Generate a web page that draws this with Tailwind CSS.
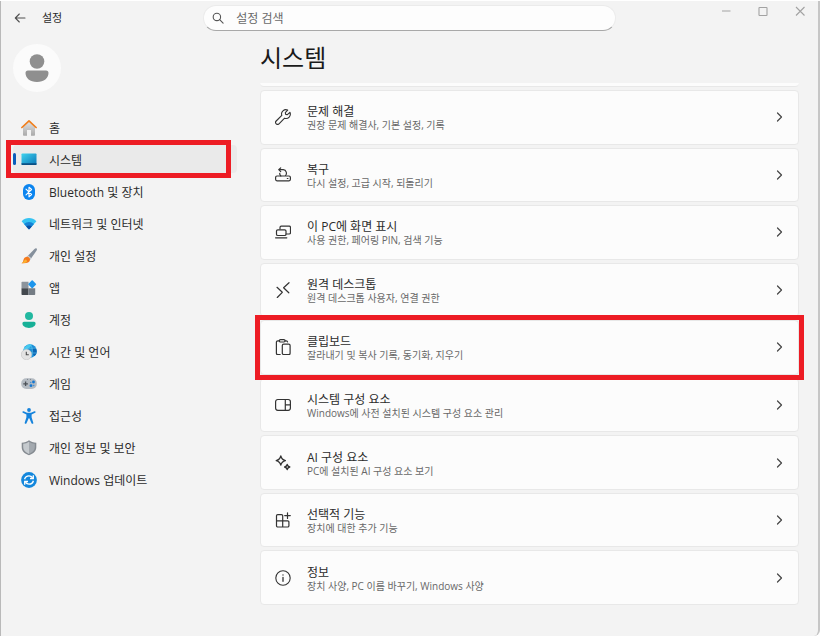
<!DOCTYPE html>
<html lang="ko">
<head>
  <meta charset="UTF-8" />
  <meta name="viewport" content="width=device-width, initial-scale=1.0"/>
  <title>설정</title>
  <script src="https://cdn.jsdelivr.net/npm/@tailwindcss/browser@4"></script>
</head>

<body class="bg-white font-['Open_Sans','Noto_Sans_CJK_KR',sans-serif] text-[#2b2b2b]">

  <div class="min-h-screen flex flex-col pt-px pr-[2px]">
  <div class="flex-1 flex flex-col bg-[#f3f3f3] border-l border-r-2 border-l-[#b9b9b9] border-r-[#c6c6c6] rounded-br-md">

    <!-- Barra de título -->
    <header class="grid grid-cols-[1fr_2fr_1fr] items-start h-10">
      <div class="flex items-center gap-4 pl-[13px] h-[34px]">
        <button title="뒤로">
          <svg viewBox="0 0 12 12" class="w-3 h-3" fill="none" stroke="#505050" stroke-width="1.1" stroke-linecap="round" stroke-linejoin="round">
            <path d="M11 6H1.5M5.3 2 1.3 6l4 4" />
          </svg>
        </button>
        <span class="text-[11px] leading-4">설정</span>
      </div>

      <label class="mt-1 -mx-0.5 flex items-center gap-3 h-[26px] px-2 rounded-full bg-[#fdfdfd] border border-[#ebebeb] border-b-[#a8a8a8]">
        <svg viewBox="0 0 12 12" class="w-3 h-3 shrink-0" fill="none" stroke="#555" stroke-width="1.1" stroke-linecap="round">
          <circle cx="4.9" cy="4.9" r="3.7" />
          <path d="m7.7 7.7 3.4 3.4" />
        </svg>
        <input type="text" aria-label="설정 검색" placeholder="설정 검색" class="flex-1 min-w-0 pt-px bg-transparent outline-none text-[12px] leading-4 placeholder:text-[#6a6a6a]">
      </label>

      <div class="flex justify-end gap-[25px] pr-3 pt-1">
        <button title="최소화">
          <svg viewBox="0 0 12 12" class="w-3 h-3" fill="none" stroke="#aaa" stroke-width="1.1"><path d="M2 6h8.500" /></svg>
        </button>
        <button title="최대화">
          <svg viewBox="0 0 12 12" class="w-3 h-3" fill="none" stroke="#a2a2a2" stroke-width="1.1"><rect x="2" y="2.500" width="8" height="8" rx="0.6" /></svg>
        </button>
        <button title="닫기">
          <svg viewBox="0 0 12 12" class="w-3 h-3" fill="none" stroke="#a2a2a2" stroke-width="1.1"><path d="m2 2 8.500 8.500M10.500 2 2 10.500" /></svg>
        </button>
      </div>
    </header>

    <div class="flex-1 flex">

      <!-- Menú lateral -->
      <aside class="w-[236px] shrink-0 pl-3 pt-[3px]">
        <div class="w-12 h-12 rounded-full bg-[#fbfbfb] flex items-center justify-center">
          <svg viewBox="0 0 24 28" class="w-6 h-7" fill="#8f8f8f">
            <circle cx="12" cy="7.500" r="7.300" />
            <path d="M3 16.500h18a2.500 2.500 0 0 1 2.500 2.500c0 5-4.500 9-11.500 9S.5 24 .5 19A2.500 2.500 0 0 1 3 16.500Z" />
          </svg>
        </div>

        <nav class="mt-[21px] flex flex-col gap-1 text-[12px] leading-4">
          <a href="#" class="h-7 flex items-center gap-3 pl-2 pt-[2px]">
            <svg viewBox="0 0 16 16" class="w-4 h-4">
              <defs>
                <linearGradient id="gHome" x1="0" y1="0" x2="0" y2="1"><stop offset="0" stop-color="#e4e4e4" /><stop offset="1" stop-color="#a9a9a9" /></linearGradient>
              </defs>
              <path d="M2 6 8 .9l6 5.100V15a.8.8 0 0 1-.8.8H10V10H6v5.800H2.800A.8.8 0 0 1 2 15Z" fill="url(#gHome)" />
              <path d="M.9 7.500 8 .9l7.100 6.600" fill="none" stroke="#f07f1d" stroke-width="1.700" stroke-linecap="round" stroke-linejoin="round" />
            </svg>
            <span class="pt-px">홈</span>
          </a>
          <a href="#" aria-current="page" class="relative h-7 flex items-center gap-3 pl-2 pt-[2px] rounded bg-[#eaeaea]">
            <span class="absolute left-0 top-2 w-[3px] h-3 rounded-full bg-[#0a5cba]"></span>
            <svg viewBox="0 0 16 16" class="w-4 h-4">
              <defs>
                <linearGradient id="gScreen" x1="0" y1="0" x2="1" y2="1"><stop offset="0" stop-color="#3fd3ee" /><stop offset="1" stop-color="#0b76b8" /></linearGradient>
              </defs>
              <rect x="0.500" y="1.500" width="15" height="11.500" rx="0.8" fill="url(#gScreen)" />
              <path d="M.5 11.200h15v1a.8.8 0 0 1-.8.8H1.300a.8.8 0 0 1-.8-.8Z" fill="#0b4f83" />
            </svg>
            <span class="pt-px">시스템</span>
            <span class="absolute -left-[7px] -top-[5px] -bottom-[5px] right-[6px] border-5 border-[#ed1c24] pointer-events-none"></span>
          </a>
          <a href="#" class="h-7 flex items-center gap-3 pl-2 pt-[2px]">
            <svg viewBox="0 0 16 16" class="w-4 h-4">
              <rect x="2" y="0" width="12" height="16" rx="6" fill="#0a84ef" />
              <path d="m5 5.200 5.600 5.300L8 12.800V3.200l2.600 2.300L5 10.800" fill="none" stroke="#fff" stroke-width="1.100" stroke-linejoin="round" stroke-linecap="round" />
            </svg>
            <span class="pt-px">Bluetooth 및 장치</span>
          </a>
          <a href="#" class="h-7 flex items-center gap-3 pl-2 pt-[2px]">
            <svg viewBox="0 0 16 16" class="w-4 h-4">
              <path d="M.6 5.300C4.800.9 11.200.9 15.400 5.300L8.500 13.100a.7.7 0 0 1-1 0Z" fill="#35c3f2" />
              <path d="M3 8c2.900-2.700 7.100-2.700 10 0l-4.500 5.100a.7.7 0 0 1-1 0Z" fill="#1583d6" />
              <path d="M5.200 10.500c1.600-1.500 4-1.500 5.600 0l-2.300 2.600a.7.7 0 0 1-1 0Z" fill="#0b4fa3" />
            </svg>
            <span class="pt-px">네트워크 및 인터넷</span>
          </a>
          <a href="#" class="h-7 flex items-center gap-3 pl-2 pt-[2px]">
            <svg viewBox="0 0 16 16" class="w-4 h-4">
              <path d="M15.600.5c.6.600.4 1.300 0 2L9.300 11.600 6 8.700 13.500.9c.7-.6 1.500-.9 2.100-.4Z" fill="#85909c" />
              <path d="m7.300 7.400 3.100 2.800-1.100 1.500-3.400-3Z" fill="#c9ced4" />
              <path d="M5.500 8.800c1.700-.4 3.900 1.300 3.500 3.300-.5 2.600-3.600 3.600-8.500 3.100 1.900-.9 1.500-1.700 2-3.400.4-1.500 1.400-2.600 3-3Z" fill="#f5791c" />
              <path d="M4.500 11.500c1 .2 1.600 1 1.500 2-.9 1.300-2.900 1.800-5.500 1.700C2.600 14.300 2.800 12.500 4.500 11.500Z" fill="#fbb32e" />
            </svg>
            <span class="pt-px">개인 설정</span>
          </a>
          <a href="#" class="h-7 flex items-center gap-3 pl-2 pt-[2px]">
            <svg viewBox="0 0 16 16" class="w-4 h-4">
              <path d="M1.200 1.700h6.300v6.500H.5V2.400a.7.7 0 0 1 .7-.7Z" fill="#8c949c" />
              <path d="M.5 8.200h7v6.800H1.200a.7.7 0 0 1-.7-.7Z" fill="#43484e" />
              <path d="M7.500 8.200h6.700v6.100a.7.7 0 0 1-.7.7h-6Z" fill="#747c84" />
              <rect x="8.200" y="1.200" width="6" height="6" rx="0.800" transform="rotate(45 11.200 4.200)" fill="#1c95ec" />
            </svg>
            <span class="pt-px">앱</span>
          </a>
          <a href="#" class="h-7 flex items-center gap-3 pl-2 pt-[2px]">
            <svg viewBox="0 0 16 16" class="w-4 h-4">
              <circle cx="8" cy="4" r="4" fill="#22b8a0" />
              <path d="M3 9.700h10a1.600 1.600 0 0 1 1.600 1.600c0 2.700-2.900 4.700-6.600 4.700s-6.600-2-6.600-4.700A1.600 1.600 0 0 1 3 9.700Z" fill="#17b097" />
            </svg>
            <span class="pt-px">계정</span>
          </a>
          <a href="#" class="h-7 flex items-center gap-3 pl-2 pt-[2px]">
            <svg viewBox="0 0 16 16" class="w-4 h-4">
              <circle cx="9" cy="7" r="6.800" fill="#1a8fd8" />
              <path d="M4 3c2-2.500 4.500-3 6.500-2.700L9.500 3 7 4.500 5.500 7.500 2.300 7C2.400 5.500 3 4 4 3Z" fill="#43c8ee" />
              <path d="M11.500 3.500 15 4.200c1.200 3 .8 5.800-1.400 7.800L11 9.500Z" fill="#0c66b4" />
              <path d="M9.500.3c2.500 4 2.500 9.500.5 13.400M3 4.200h12M9 9h6.500" fill="none" stroke="#67cdf0" stroke-width="0.600" />
              <circle cx="5.500" cy="10.500" r="5.200" fill="#e3e3e3" stroke="#bdbdbd" stroke-width="0.500" />
              <path d="M5.300 7.800v3h2.500" fill="none" stroke="#4d4d4d" stroke-width="1.100" />
            </svg>
            <span class="pt-px">시간 및 언어</span>
          </a>
          <a href="#" class="h-7 flex items-center gap-3 pl-2 pt-[2px]">
            <svg viewBox="0 0 16 16" class="w-4 h-4">
              <rect x="0.200" y="2.200" width="15.600" height="10.800" rx="5" fill="#b4bbc2" />
              <path d="M4.600 5.500v4.600M2.300 7.800h4.600" stroke="#4c5157" stroke-width="1.300" />
              <path d="M6.200 3.400h.8M9 3.400h.8" stroke="#5d6369" stroke-width="0.800" />
              <circle cx="12.500" cy="6" r="1.400" fill="#1277d3" />
              <circle cx="10" cy="9.700" r="1.400" fill="#1277d3" />
              <circle cx="12.700" cy="9.500" r="0.800" fill="#4a93d4" />
              <circle cx="9.700" cy="6.500" r="0.800" fill="#4a93d4" />
            </svg>
            <span class="pt-px">게임</span>
          </a>
          <a href="#" class="h-7 flex items-center gap-3 pl-2 pt-[2px]">
            <svg viewBox="0 0 16 16" class="w-4 h-4">
              <circle cx="8" cy="2" r="1.900" fill="#1583dc" />
              <path d="M2.600 3.200 6 4.700h4l3.400-1.500c1.300-.3 1.600 1 .7 1.500L10.600 6.600v2.600l1.700 5.500c.2 1.200-1.300 1.600-1.800.5L8.300 10.300h-.6l-2.200 4.900c-.5 1.100-2 .7-1.800-.5l1.700-5.500V6.600L1.900 4.700c-.9-.5-.6-1.800.7-1.500Z" fill="#1583dc" />
            </svg>
            <span class="pt-px">접근성</span>
          </a>
          <a href="#" class="h-7 flex items-center gap-3 pl-2 pt-[2px]">
            <svg viewBox="0 0 16 16" class="w-4 h-4">
              <path d="M8 .3c2 1.600 4.300 2.300 7.300 2.400v4.600c0 3.600-2.500 6.300-7.300 8-4.800-1.700-7.300-4.400-7.300-8V2.700C3.700 2.600 6 1.900 8 .3Z" fill="#858b91" />
              <path d="M8 1.800c1.700 1.200 3.600 1.800 5.800 2v3.500c0 2.900-1.900 5-5.800 6.600Z" fill="#a3a9af" />
              <path d="M8 1.800C6.300 3 4.400 3.600 2.200 3.800v3.500c0 2.900 1.900 5 5.800 6.600Z" fill="#c5cace" />
            </svg>
            <span class="pt-px">개인 정보 및 보안</span>
          </a>
          <a href="#" class="h-7 flex items-center gap-3 pl-2 pt-[2px]">
            <svg viewBox="0 0 16 16" class="w-4 h-4">
              <circle cx="8" cy="8" r="7.900" fill="#1387dc" />
              <path d="M3.600 7.300c.6-2.200 2.300-3.400 4.400-3.400 1.500 0 2.700.7 3.600 1.800M12.400 8.700c-.6 2.200-2.300 3.400-4.400 3.400-1.500 0-2.700-.7-3.600-1.800" fill="none" stroke="#fff" stroke-width="1.400" />
              <path d="M12.300 3.200v3.300H9M3.700 12.800V9.500H7" fill="none" stroke="#fff" stroke-width="1.300" />
            </svg>
            <span class="pt-px">Windows 업데이트</span>
          </a>
        </nav>
      </aside>

      <!-- Contenido -->
      <main class="flex-1 min-w-0 flex flex-col pl-[23px] pr-[19px] pb-[31px]">
        <h1 class="h-[42px] text-[24px] leading-[34px] font-normal text-[#1a1a1a]">시스템</h1>
        <div class="h-1 rounded-b bg-[#fcfcfc] border-b border-[#e8e8e8]"></div>

        <ul class="mt-[3px] flex-1 grid auto-rows-fr gap-[3px]">
          <li class="relative">
            <a href="#" class="h-full flex items-center gap-4 px-[14px] rounded bg-[#fcfcfc] border border-[#e8e8e8]">
              <svg viewBox="0 0 16 16" class="w-4 h-4 shrink-0" fill="none" stroke="#333" stroke-width="1.100" stroke-linejoin="round" stroke-linecap="round">
                <path d="M12.700 1.100A4.300 4.300 0 0 0 6.800 6.400L1.200 12a1.900 1.900 0 0 0 2.800 2.800l5.600-5.600a4.300 4.300 0 0 0 5.300-5.900l-2.500 2.400-1.700-.3-.4-1.800Z" />
              </svg>
              <span class="flex-1 pt-[2px]">
                <span class="block text-[12px] leading-[14px]">문제 해결</span>
                <span class="block text-[10px] leading-3 text-[#686868]">권장 문제 해결사, 기본 설정, 기록</span>
              </span>
              <svg viewBox="0 0 10 10" class="w-[10px] h-[10px]" fill="none" stroke="#444" stroke-width="1.200" stroke-linecap="round" stroke-linejoin="round"><path d="m3.500 1 4 4-4 4" /></svg>
            </a>
          </li>
          <li class="relative">
            <a href="#" class="h-full flex items-center gap-4 px-[14px] rounded bg-[#fcfcfc] border border-[#e8e8e8]">
              <svg viewBox="0 0 16 16" class="w-4 h-4 shrink-0" fill="none" stroke="#333" stroke-width="1.200" stroke-linejoin="round" stroke-linecap="round">
                <path d="M4.500 9H2A1.500 1.500 0 0 0 .6 10.500v1.800A1.500 1.500 0 0 0 2 13.800h12a1.500 1.500 0 0 0 1.400-1.500v-1.800A1.500 1.500 0 0 0 14 9h-2.500M12.300 11.500h.6" />
                <path d="M5.800 9h4.600a3.700 3.700 0 0 0-2.200-6.300H4M5.700.9 3.700 2.700l2 2" />
                <path d="M5.800 9A3.600 3.600 0 0 1 4.700 6.300" />
              </svg>
              <span class="flex-1 pt-[2px]">
                <span class="block text-[12px] leading-[14px]">복구</span>
                <span class="block text-[10px] leading-3 text-[#686868]">다시 설정, 고급 시작, 되돌리기</span>
              </span>
              <svg viewBox="0 0 10 10" class="w-[10px] h-[10px]" fill="none" stroke="#444" stroke-width="1.200" stroke-linecap="round" stroke-linejoin="round"><path d="m3.500 1 4 4-4 4" /></svg>
            </a>
          </li>
          <li class="relative">
            <a href="#" class="h-full flex items-center gap-4 px-[14px] rounded bg-[#fcfcfc] border border-[#e8e8e8]">
              <svg viewBox="0 0 16 16" class="w-4 h-4 shrink-0" fill="none" stroke="#333" stroke-width="1.200" stroke-linejoin="round" stroke-linecap="round">
                <path d="M5 5V3.500A1.300 1.300 0 0 1 6.300 2.200h7.900a1.300 1.300 0 0 1 1.300 1.300v5.200a1.300 1.300 0 0 1-1.300 1.300h-3" />
                <rect x="1.500" y="5.800" width="9.500" height="5.700" rx="1.300" />
                <path d="M.6 13.800h11.200" />
              </svg>
              <span class="flex-1 pt-[2px]">
                <span class="block text-[12px] leading-[14px]">이 PC에 화면 표시</span>
                <span class="block text-[10px] leading-3 text-[#686868]">사용 권한, 페어링 PIN, 검색 기능</span>
              </span>
              <svg viewBox="0 0 10 10" class="w-[10px] h-[10px]" fill="none" stroke="#444" stroke-width="1.200" stroke-linecap="round" stroke-linejoin="round"><path d="m3.500 1 4 4-4 4" /></svg>
            </a>
          </li>
          <li class="relative">
            <a href="#" class="h-full flex items-center gap-4 px-[14px] rounded bg-[#fcfcfc] border border-[#e8e8e8]">
              <svg viewBox="0 0 16 16" class="w-4 h-4 shrink-0" fill="none" stroke="#333" stroke-width="1.200" stroke-linejoin="round" stroke-linecap="round">
                <path d="m2 5.300 5.300 5L2.300 15.500M14 .7 8.600 5.800l5.200 5" />
              </svg>
              <span class="flex-1 pt-[2px]">
                <span class="block text-[12px] leading-[14px]">원격 데스크톱</span>
                <span class="block text-[10px] leading-3 text-[#686868]">원격 데스크톱 사용자, 연결 권한</span>
              </span>
              <svg viewBox="0 0 10 10" class="w-[10px] h-[10px]" fill="none" stroke="#444" stroke-width="1.200" stroke-linecap="round" stroke-linejoin="round"><path d="m3.500 1 4 4-4 4" /></svg>
            </a>
          </li>
          <li class="relative">
            <a href="#" class="h-full flex items-center gap-4 px-[14px] rounded bg-[#fcfcfc] border border-[#e8e8e8]">
              <svg viewBox="0 0 16 16" class="w-4 h-4 shrink-0" fill="none" stroke="#333" stroke-width="1.200" stroke-linejoin="round" stroke-linecap="round">
                <path d="M4.500 1.800H2.800a1.400 1.400 0 0 0-1.400 1.400v11a1.400 1.400 0 0 0 1.400 1.400h2.400M10 1.800h1.200a1.400 1.400 0 0 1 1.400 1.200" />
                <rect x="4.300" y="0.600" width="5.800" height="2.400" rx="1.200" />
                <rect x="7.300" y="5.200" width="7.800" height="10.400" rx="1.400" />
              </svg>
              <span class="flex-1 pt-[2px]">
                <span class="block text-[12px] leading-[14px]">클립보드</span>
                <span class="block text-[10px] leading-3 text-[#686868]">잘라내기 및 복사 기록, 동기화, 지우기</span>
              </span>
              <svg viewBox="0 0 10 10" class="w-[10px] h-[10px]" fill="none" stroke="#444" stroke-width="1.200" stroke-linecap="round" stroke-linejoin="round"><path d="m3.500 1 4 4-4 4" /></svg>
            </a>
            <span class="absolute z-10 -inset-[5px] border-5 border-[#ed1c24] pointer-events-none"></span>
          </li>
          <li class="relative">
            <a href="#" class="h-full flex items-center gap-4 px-[14px] rounded bg-[#fcfcfc] border border-[#e8e8e8]">
              <svg viewBox="0 0 16 16" class="w-4 h-4 shrink-0" fill="none" stroke="#333" stroke-width="1.200" stroke-linejoin="round" stroke-linecap="round">
                <rect x="0.600" y="2.500" width="14.800" height="10.800" rx="2.200" />
                <path d="M10.300 2.500v10.800M10.300 7.900h5.100" />
              </svg>
              <span class="flex-1 pt-[2px]">
                <span class="block text-[12px] leading-[14px]">시스템 구성 요소</span>
                <span class="block text-[10px] leading-3 text-[#686868]">Windows에 사전 설치된 시스템 구성 요소 관리</span>
              </span>
              <svg viewBox="0 0 10 10" class="w-[10px] h-[10px]" fill="none" stroke="#444" stroke-width="1.200" stroke-linecap="round" stroke-linejoin="round"><path d="m3.500 1 4 4-4 4" /></svg>
            </a>
          </li>
          <li class="relative">
            <a href="#" class="h-full flex items-center gap-4 px-[14px] rounded bg-[#fcfcfc] border border-[#e8e8e8]">
              <svg viewBox="0 0 16 16" class="w-4 h-4 shrink-0" fill="none" stroke="#333" stroke-width="1.300" stroke-linejoin="round">
                <path d="M5.800 1c.7 2.900 1.700 3.900 4.600 4.600-2.900.7-3.900 1.700-4.600 4.600C5.100 7.300 4.100 6.300 1.200 5.600 4.100 4.900 5.100 3.900 5.800 1Z" />
                <path d="M12.200 9.400c.3 1.700.9 2.200 2.600 2.600-1.700.3-2.300.9-2.600 2.600-.3-1.700-.9-2.300-2.600-2.600 1.700-.4 2.300-.9 2.600-2.600Z" />
              </svg>
              <span class="flex-1 pt-[2px]">
                <span class="block text-[12px] leading-[14px]">AI 구성 요소</span>
                <span class="block text-[10px] leading-3 text-[#686868]">PC에 설치된 AI 구성 요소 보기</span>
              </span>
              <svg viewBox="0 0 10 10" class="w-[10px] h-[10px]" fill="none" stroke="#444" stroke-width="1.200" stroke-linecap="round" stroke-linejoin="round"><path d="m3.500 1 4 4-4 4" /></svg>
            </a>
          </li>
          <li class="relative">
            <a href="#" class="h-full flex items-center gap-4 px-[14px] rounded bg-[#fcfcfc] border border-[#e8e8e8]">
              <svg viewBox="0 0 16 16" class="w-4 h-4 shrink-0" fill="none" stroke="#333" stroke-width="1.200" stroke-linejoin="round" stroke-linecap="round">
                <path d="M7.700 8.900V3.800a1.200 1.200 0 0 0-1.200-1.200H2.700a1.200 1.200 0 0 0-1.200 1.200v10a1.200 1.200 0 0 0 1.200 1.200h10a1.200 1.200 0 0 0 1.200-1.200v-3.700a1.200 1.200 0 0 0-1.200-1.200ZM1.500 8.900h6.200V15" />
                <path d="M12.500.8v5.600M9.700 3.600h5.600" />
              </svg>
              <span class="flex-1 pt-[2px]">
                <span class="block text-[12px] leading-[14px]">선택적 기능</span>
                <span class="block text-[10px] leading-3 text-[#686868]">장치에 대한 추가 기능</span>
              </span>
              <svg viewBox="0 0 10 10" class="w-[10px] h-[10px]" fill="none" stroke="#444" stroke-width="1.200" stroke-linecap="round" stroke-linejoin="round"><path d="m3.500 1 4 4-4 4" /></svg>
            </a>
          </li>
          <li class="relative">
            <a href="#" class="h-full flex items-center gap-4 px-[14px] rounded bg-[#fcfcfc] border border-[#e8e8e8]">
              <svg viewBox="0 0 16 16" class="w-4 h-4 shrink-0" fill="none" stroke="#333" stroke-width="1.100" stroke-linecap="round">
                <circle cx="8" cy="8" r="7.200" />
                <path d="M8 7.300v4M8 4.800v.2" stroke-width="1.300" />
              </svg>
              <span class="flex-1 pt-[2px]">
                <span class="block text-[12px] leading-[14px]">정보</span>
                <span class="block text-[10px] leading-3 text-[#686868]">장치 사양, PC 이름 바꾸기, Windows 사양</span>
              </span>
              <svg viewBox="0 0 10 10" class="w-[10px] h-[10px]" fill="none" stroke="#444" stroke-width="1.200" stroke-linecap="round" stroke-linejoin="round"><path d="m3.500 1 4 4-4 4" /></svg>
            </a>
          </li>
        </ul>
      </main>

    </div>
  </div>
  </div>
</body>
</html>
